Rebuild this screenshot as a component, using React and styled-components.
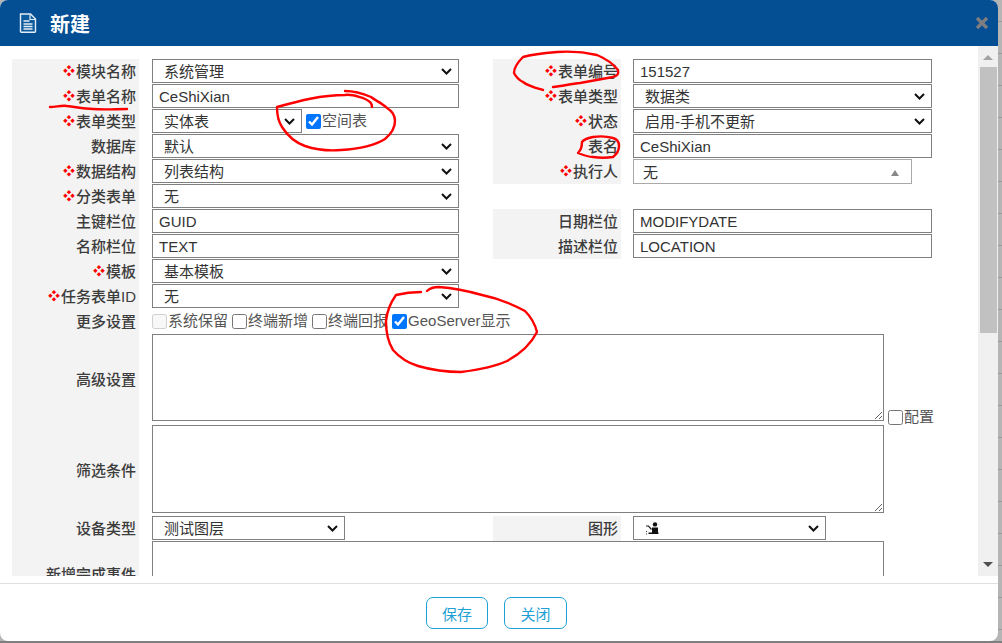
import React from 'react';
import styled, { createGlobalStyle } from 'styled-components';

const CJK = '"Liberation Sans", "Noto Sans CJK SC", sans-serif';

const chevron = "url(\"data:image/svg+xml,%3Csvg xmlns='http://www.w3.org/2000/svg' width='11' height='7' viewBox='0 0 11 7'%3E%3Cpath d='M1 1l4.5 4.5L10 1' fill='none' stroke='%23111' stroke-width='2'/%3E%3C/svg%3E\")";

const GlobalStyle = createGlobalStyle`
  html, body {
    margin: 0;
    padding: 0;
    height: 100%;
    overflow: hidden;
    background: #b5b5b5;
  }
  #root {
    height: 100%;
  }
`;

const Root = styled.div`
  width: 1002px;
  height: 643px;
  font-family: ${CJK};
  font-size: 15px;
  color: #333;
  overflow: hidden;
  background:
    linear-gradient(to bottom, transparent 641px, #7f7f7f 641px),
    repeating-linear-gradient(to bottom, transparent 0 21px, #999 21px 22px, transparent 22px 32px);
`;

const Modal = styled.section`
  position: relative;
  width: 998px;
  height: 641px;
  display: flex;
  flex-direction: column;
  background: #fff;
  border-radius: 8px;
  overflow: hidden;
`;

const Header = styled.header`
  flex: none;
  height: 46px;
  padding: 0 9px 0 19px;
  display: flex;
  align-items: center;
  gap: 13px;
  background: #044f94;
`;

const Title = styled.h3`
  flex: 1;
  margin: 0;
  font-size: 20px;
  font-weight: 700;
  color: #fff;
`;

const Main = styled.div`
  flex: none;
  height: 530px;
  display: flex;
  overflow: hidden;
`;

const FormArea = styled.div`
  flex: 1;
  padding: 13px 0 0 12px;
  overflow: hidden;
`;

const Row = styled.div`
  display: flex;
  height: ${props => props.height || 25}px;
`;

const Label = styled.label`
  flex: none;
  box-sizing: border-box;
  width: ${props => (props.right ? 128 : 127)}px;
  margin: ${props => (props.right ? '0 12px 0 34px' : '0 13px 0 0')};
  padding-right: 3px;
  display: flex;
  align-items: center;
  justify-content: flex-end;
  background: #f3f3f3;
  font-weight: 500;
  color: #3c3c3c;
  line-height: 20px;
  white-space: nowrap;
`;

const Required = styled.span`
  color: #f00;
  font-size: 12px;
  font-weight: 400;
  margin-right: 1px;
`;

const Select = styled.select`
  box-sizing: border-box;
  width: ${props => props.width || 307}px;
  height: 24px;
  padding: 0 20px 0 11px;
  border: 1px solid #808080;
  border-radius: 0;
  appearance: none;
  background: #fff ${chevron} no-repeat right 6px center;
  font-family: ${CJK};
  font-size: 15px;
  color: #333;
`;

const TextInput = styled.input`
  box-sizing: border-box;
  width: ${props => props.width || 307}px;
  height: 24px;
  padding: 0 6px;
  border: 1px solid #808080;
  border-radius: 0;
  outline: none;
  background: #fff;
  font-family: ${CJK};
  font-size: 15px;
  color: #333;
`;

const Combo = styled.div`
  box-sizing: border-box;
  width: 279px;
  height: 25px;
  padding: 0 12px 0 9px;
  display: flex;
  align-items: center;
  justify-content: space-between;
  border: 1px solid #a9a9a9;
  color: #333;
`;

const ComboArrow = styled.span`
  width: 0;
  height: 0;
  margin-top: 3px;
  border-left: 4px solid transparent;
  border-right: 4px solid transparent;
  border-bottom: 6px solid #888;
`;

const Notes = styled.textarea`
  display: block;
  box-sizing: border-box;
  flex: none;
  width: 732px;
  height: ${props => props.height}px;
  padding: 4px 6px;
  border: 1px solid #808080;
  border-radius: 0;
  outline: none;
  background: #fff;
`;

const Cell = styled.div`
  position: relative;
  flex: none;
  width: ${props => props.width || 307}px;
  height: 24px;
  display: flex;
  align-items: center;
`;

const GlyphSlot = styled.svg`
  position: absolute;
  left: 13px;
  top: 6px;
  pointer-events: none;
`;

const CheckLabel = styled.label`
  display: inline-flex;
  align-items: center;
  margin-right: 4px;
  color: #555;
  line-height: 20px;
  white-space: nowrap;
`;

const Check = styled.input.attrs({ type: 'checkbox' })`
  box-sizing: border-box;
  width: 15px;
  height: 15px;
  margin: 0 1px 0 ${props => props.offset || 0}px;
  accent-color: #0075ff;
`;

const ConfigWrap = styled.div`
  align-self: flex-start;
  margin: 73px 0 0 4px;
`;

const Scrollbar = styled.div`
  flex: none;
  width: 20px;
  display: flex;
  flex-direction: column;
  align-items: center;
  background: #f0f0f0;
`;

const ScrollButton = styled.span`
  flex: none;
  width: 0;
  height: 0;
  margin: ${props => (props.down ? 'auto 0 9px' : '9px 0 7px')};
  border-left: 5px solid transparent;
  border-right: 5px solid transparent;
  border-top: ${props => (props.down ? '5px solid #505050' : '0')};
  border-bottom: ${props => (props.down ? '0' : '5px solid #a3a3a3')};
`;

const ScrollThumb = styled.div`
  flex: none;
  width: 17px;
  height: 266px;
  margin-left: 1px;
  background: #c1c1c1;
`;

const Footer = styled.footer`
  flex: 1;
  margin-top: 7px;
  padding: 13px 5px 0 0;
  display: flex;
  justify-content: center;
  gap: 16px;
  border-top: 1px solid #e0e0e0;
`;

const FooterButton = styled.button`
  box-sizing: border-box;
  width: ${props => props.width}px;
  height: 32px;
  border: 1px solid #1ea0d5;
  border-radius: 7px;
  background: #fff;
  font-family: ${CJK};
  font-size: 15px;
  color: #1ea0d5;
`;

const Annotations = styled.svg`
  position: absolute;
  left: 0;
  top: 0;
  width: 998px;
  height: 641px;
  pointer-events: none;
`;

const Ink = styled.path`
  fill: none;
  stroke: #f00;
  stroke-width: 2.4;
  stroke-linecap: round;
  stroke-linejoin: round;
`;

const DocIcon = () => (
  <svg width="18" height="20" viewBox="0 0 18 20">
    <path d="M1.5 1h10l5 5v12.5a.8.8 0 0 1-.8.8H2.3a.8.8 0 0 1-.8-.8z" fill="#0d5a9c" stroke="#e4edf6" strokeWidth="1.4" />
    <path d="M11 1.5v5h5.5" fill="none" stroke="#e4edf6" strokeWidth="1.2" />
    <path d="M4.5 8h6M4.5 11h9M4.5 13.5h9M4.5 16h9" stroke="#e4edf6" strokeWidth="1.3" />
  </svg>
);

const CloseIcon = () => (
  <svg width="14" height="14" viewBox="0 0 14 14">
    <path d="M2 2l10 10M12 2L2 12" stroke="#7d7d80" strokeWidth="3.4" />
  </svg>
);

// the small figure the shape option shows
const ShapeGlyph = () => (
  <GlyphSlot width="13" height="13" viewBox="0 0 13 13">
    <circle cx="9" cy="2.4" r="2.2" fill="#111" />
    <path d="M6 5.5h6v5H6zM2.5 10.5h10V12h-10z" fill="#111" />
    <path d="M0 4h2.5L5.5 7.5" fill="none" stroke="#222" strokeWidth="1.2" />
    <path d="M0 9h1v1H0zM0 11.5h1v1H0z" fill="#333" />
  </GlyphSlot>
);

const Name = ({ required, children, right }) => (
  <Label right={right}>
    {required && <Required>❖</Required>}
    {children}
  </Label>
);

const Options = ({ value, width }) => (
  <Select width={width} defaultValue={value}>
    <option>{value}</option>
  </Select>
);

const App = () => (
  <Root>
    <GlobalStyle />
    <Modal>
      <Header>
        <DocIcon />
        <Title>新建</Title>
        <CloseIcon />
      </Header>
      <Main>
        <FormArea>
          <Row>
            <Name required>模块名称</Name>
            <Options value="系统管理" />
            <Name required right>表单编号</Name>
            <TextInput width={299} defaultValue="151527" />
          </Row>
          <Row>
            <Name required>表单名称</Name>
            <TextInput defaultValue="CeShiXian" />
            <Name required right>表单类型</Name>
            <Options value="数据类" width={299} />
          </Row>
          <Row>
            <Name required>表单类型</Name>
            <Cell>
              <Options value="实体表" width={150} />
              <CheckLabel>
                <Check offset={4} defaultChecked />
                空间表
              </CheckLabel>
            </Cell>
            <Name required right>状态</Name>
            <Options value="启用-手机不更新" width={299} />
          </Row>
          <Row>
            <Name>数据库</Name>
            <Options value="默认" />
            <Name right>表名</Name>
            <TextInput width={299} defaultValue="CeShiXian" />
          </Row>
          <Row>
            <Name required>数据结构</Name>
            <Options value="列表结构" />
            <Name required right>执行人</Name>
            <Combo>
              无
              <ComboArrow />
            </Combo>
          </Row>
          <Row>
            <Name required>分类表单</Name>
            <Options value="无" />
          </Row>
          <Row>
            <Name>主键栏位</Name>
            <TextInput defaultValue="GUID" />
            <Name right>日期栏位</Name>
            <TextInput width={299} defaultValue="MODIFYDATE" />
          </Row>
          <Row>
            <Name>名称栏位</Name>
            <TextInput defaultValue="TEXT" />
            <Name right>描述栏位</Name>
            <TextInput width={299} defaultValue="LOCATION" />
          </Row>
          <Row>
            <Name required>模板</Name>
            <Options value="基本模板" />
          </Row>
          <Row>
            <Name required>任务表单ID</Name>
            <Options value="无" />
          </Row>
          <Row>
            <Name>更多设置</Name>
            <Cell>
              <CheckLabel>
                <Check disabled />
                系统保留
              </CheckLabel>
              <CheckLabel>
                <Check />
                终端新增
              </CheckLabel>
              <CheckLabel>
                <Check />
                终端回报
              </CheckLabel>
              <CheckLabel>
                <Check defaultChecked />
                GeoServer显示
              </CheckLabel>
            </Cell>
          </Row>
          <Row height={91}>
            <Name>高级设置</Name>
            <Notes height={87} />
            <ConfigWrap>
              <CheckLabel>
                <Check />
                配置
              </CheckLabel>
            </ConfigWrap>
          </Row>
          <Row height={91}>
            <Name>筛选条件</Name>
            <Notes height={88} />
          </Row>
          <Row>
            <Name>设备类型</Name>
            <Cell>
              <Options value="测试图层" width={193} />
            </Cell>
            <Name right>图形</Name>
            <Cell width={299}>
              <Options value=" " width={193} />
              <ShapeGlyph />
            </Cell>
          </Row>
          <Row height={68}>
            <Name>新增完成事件</Name>
            <Notes height={68} />
          </Row>
        </FormArea>
        <Scrollbar>
          <ScrollButton />
          <ScrollThumb />
          <ScrollButton down />
        </Scrollbar>
      </Main>
      <Footer>
        <FooterButton width={62}>保存</FooterButton>
        <FooterButton width={63}>关闭</FooterButton>
      </Footer>
      <Annotations viewBox="0 0 998 641">
        <Ink d="M50 107c6 0 12-2 17-1 9 1 17 3 26 3 12 1 23 0 34 0" />
        <Ink d="M372 107c0-4-2-6-9-9-7-2-12-4-18-3-24 0-46 6-68 12 0 8 1 14 5 20 5 8 12 15 23 19 12 4 24 5 36 4 17-1 33-4 44-11 6-5 10-12 10-18 0-6-3-10-8-13-5-5-11-7-16-11-7-3-15-6-26-6" />
        <Ink d="M618 70c-6-8-14-12-21-15-13-3-27-4-40-3-13 1-24 2-34 5-5 5-9 11-9 16 2 4 5 7 9 9 5 4 13 6 20 8" />
        <Ink d="M618 71c1 3-1 5-5 6-11 2-22 4-33 6-9 1-18 3-27 4" />
        <Ink d="M619 146c0-4-2-7-6-8-7-2-14-2-20-1-5 1-9 2-11 5 0 4-1 8-4 11 5 2 10 4 15 4 7 1 13 1 20 0 4-3 6-7 6-11z" />
        <Ink d="M421 292c-8 0-17 1-25 3-5 7-9 16-10 26 0 10 2 21 7 29 7 8 15 13 25 16 14 4 29 6 43 6 16-2 33-5 46-11 13-7 24-17 30-29-2-8-6-15-12-21-13-7-28-13-43-16-14-4-29-7-43-8-4 0-9 1-12 4" />
      </Annotations>
    </Modal>
  </Root>
);

export default App;
